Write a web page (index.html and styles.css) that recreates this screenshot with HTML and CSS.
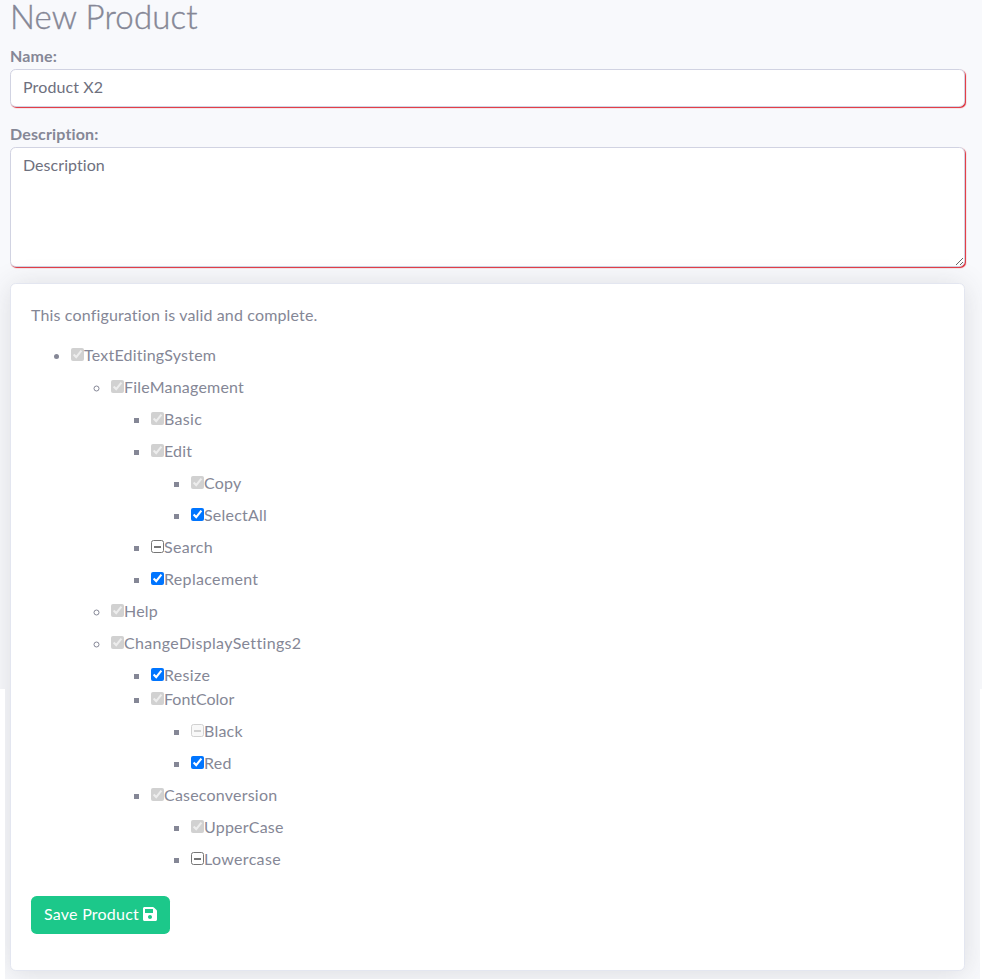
FILE: index.html
```html
<!DOCTYPE html>
<html lang="en">
<head>
<meta charset="utf-8">
<title>New Product</title>
<link rel="stylesheet" href="styles.css">
</head>
<body>
<main class="page">
  <h2>New Product</h2>
  <form>
    <label class="field-label" for="name">Name:</label>
    <input class="field name" id="name" type="text" value="Product X2">
    <label class="field-label" for="description">Description:</label>
    <textarea class="field description" id="description">Description</textarea>
    <section class="card">
      <p>This configuration is valid and complete.</p>
      <ul class="tree">
        <li><input type="checkbox" checked disabled><span>TextEditingSystem</span>
          <ul>
            <li><input type="checkbox" checked disabled><span>FileManagement</span>
              <ul>
                <li><input type="checkbox" checked disabled><span class="wide">Basic</span></li>
                <li><input type="checkbox" checked disabled><span>Edit</span>
                  <ul>
                    <li><input type="checkbox" checked disabled><span>Copy</span></li>
                    <li><input type="checkbox" checked><span>SelectAll</span></li>
                  </ul>
                </li>
                <li><input class="partial" type="checkbox"><span class="wide">Search</span></li>
                <li><input type="checkbox" checked><span class="wide">Replacement</span></li>
              </ul>
            </li>
            <li><input type="checkbox" checked disabled><span>Help</span></li>
            <li><input type="checkbox" checked disabled><span class="wide">ChangeDisplaySettings2</span>
              <ul>
                <li><input type="checkbox" checked><span class="wide">Resize</span></li>
                <li class="tight"><input type="checkbox" checked disabled><span class="narrow">FontColor</span>
                  <ul>
                    <li><input class="partial" type="checkbox" disabled><span>Black</span></li>
                    <li><input type="checkbox" checked><span class="wide">Red</span></li>
                  </ul>
                </li>
                <li><input type="checkbox" checked disabled><span>Caseconversion</span>
                  <ul>
                    <li><input type="checkbox" checked disabled><span>UpperCase</span></li>
                    <li><input class="partial" type="checkbox"><span class="wide">Lowercase</span></li>
                  </ul>
                </li>
              </ul>
            </li>
          </ul>
        </li>
      </ul>
      <button class="save" type="button"><span>Save Product</span>
        <svg viewBox="0 0 448 512" width="14" height="16" aria-hidden="true"><path fill="currentColor" d="M433.941 129.941l-83.882-83.882A48 48 0 0 0 316.118 32H48C21.490 32 0 53.490 0 80v352c0 26.510 21.490 48 48 48h352c26.510 0 48-21.490 48-48V163.882a48 48 0 0 0-14.059-33.941zM224 416c-35.346 0-64-28.654-64-64s28.654-64 64-64 64 28.654 64 64-28.654 64-64 64zm96-304.520V212c0 6.627-5.373 12-12 12H76c-6.627 0-12-5.373-12-12V108c0-6.627 5.373-12 12-12h228.520c3.183 0 6.235 1.264 8.485 3.515l3.480 3.480A11.996 11.996 0 0 1 320 111.480z"/></svg>
      </button>
    </section>
  </form>
</main>
</body>
</html>
```
FILE: styles.css
```css
* { box-sizing: border-box; }
html { overflow: hidden; background: #fff; }
body {
  margin: 0;
  color: #858796;
  font: 16px/24px Lato, "Open Sans", sans-serif;
  letter-spacing: .15px;
}
.page {
  display: flow-root;
  height: 979px;
  padding: 0 16px 0 10px;
  background: #f8f9fc;
  clip-path: polygon(0 0, 100% 0, 100% 689px, 980px 689px, 980px 100%, 5px 100%, 5px 689px, 0 689px);
}
h2 {
  margin: 0;
  padding-bottom: 11px;
  font-size: 33px;
  font-weight: 300;
  line-height: 33px;
  letter-spacing: .15px;
  -webkit-text-stroke: .4px #858796;
}
.field-label { display: block; padding-bottom: 1px; font-weight: 700; }
.field-label + .name + .field-label { margin-top: -1px; }
.field {
  display: block;
  width: calc(100% - 1px);
  margin: 0 0 16px;
  padding: 5px 12px 7px;
  border: 1px solid #d1d3e2;
  border-radius: 5.6px;
  background: #fff;
  color: #6e707e;
  font: inherit;
  letter-spacing: .05px;
  box-shadow: 1px 1px 1px #e02b35;
  outline: 0;
}
.name { height: 38px; padding: 4px 12px 8px; letter-spacing: .12px; }
.description { height: 120px; resize: vertical; }
.card {
  height: 688px;
  width: calc(100% - 1px);
  padding: 19px 20px 20px;
  border: 1px solid #e3e6f0;
  border-radius: 5.6px;
  background: #fff;
  box-shadow: 0 2.4px 28px rgba(58, 59, 69, .15);
}
.card p { margin: 0 0 16px; }
.tree, .tree ul { margin: 0; padding-left: 40px; }
.tree { letter-spacing: .21px; }
.tree .wide { letter-spacing: .33px; }
.tree .narrow { letter-spacing: 0; }
.tree ul { padding-top: 8px; }
.tree li + li { margin-top: 8px; }
.tree li.tight { margin-top: 0; }
.tree input {
  width: 13px;
  height: 13px;
  margin: 0;
  vertical-align: 0;
}
.tree .partial {
  appearance: none;
  border: 1px solid #767676;
  border-radius: 2.5px;
  background: linear-gradient(#767676, #767676) 2px 5px / 7px 2px no-repeat #fff;
}
.tree .partial:disabled {
  border-color: #d1d1d1;
  background: linear-gradient(#d1d1d1, #d1d1d1) 2px 5px / 7px 2px no-repeat #f8f8f8;
}
.save {
  display: flex;
  align-items: center;
  gap: 4px;
  width: 139px;
  height: 38px;
  margin-top: 25px;
  padding: 0 12px 2px 13px;
  border: 0;
  border-radius: 5.6px;
  background: #1cc88a;
  color: #fff;
  font: inherit;
  letter-spacing: .24px;
  white-space: nowrap;
}
.save svg { flex: none; }
```
